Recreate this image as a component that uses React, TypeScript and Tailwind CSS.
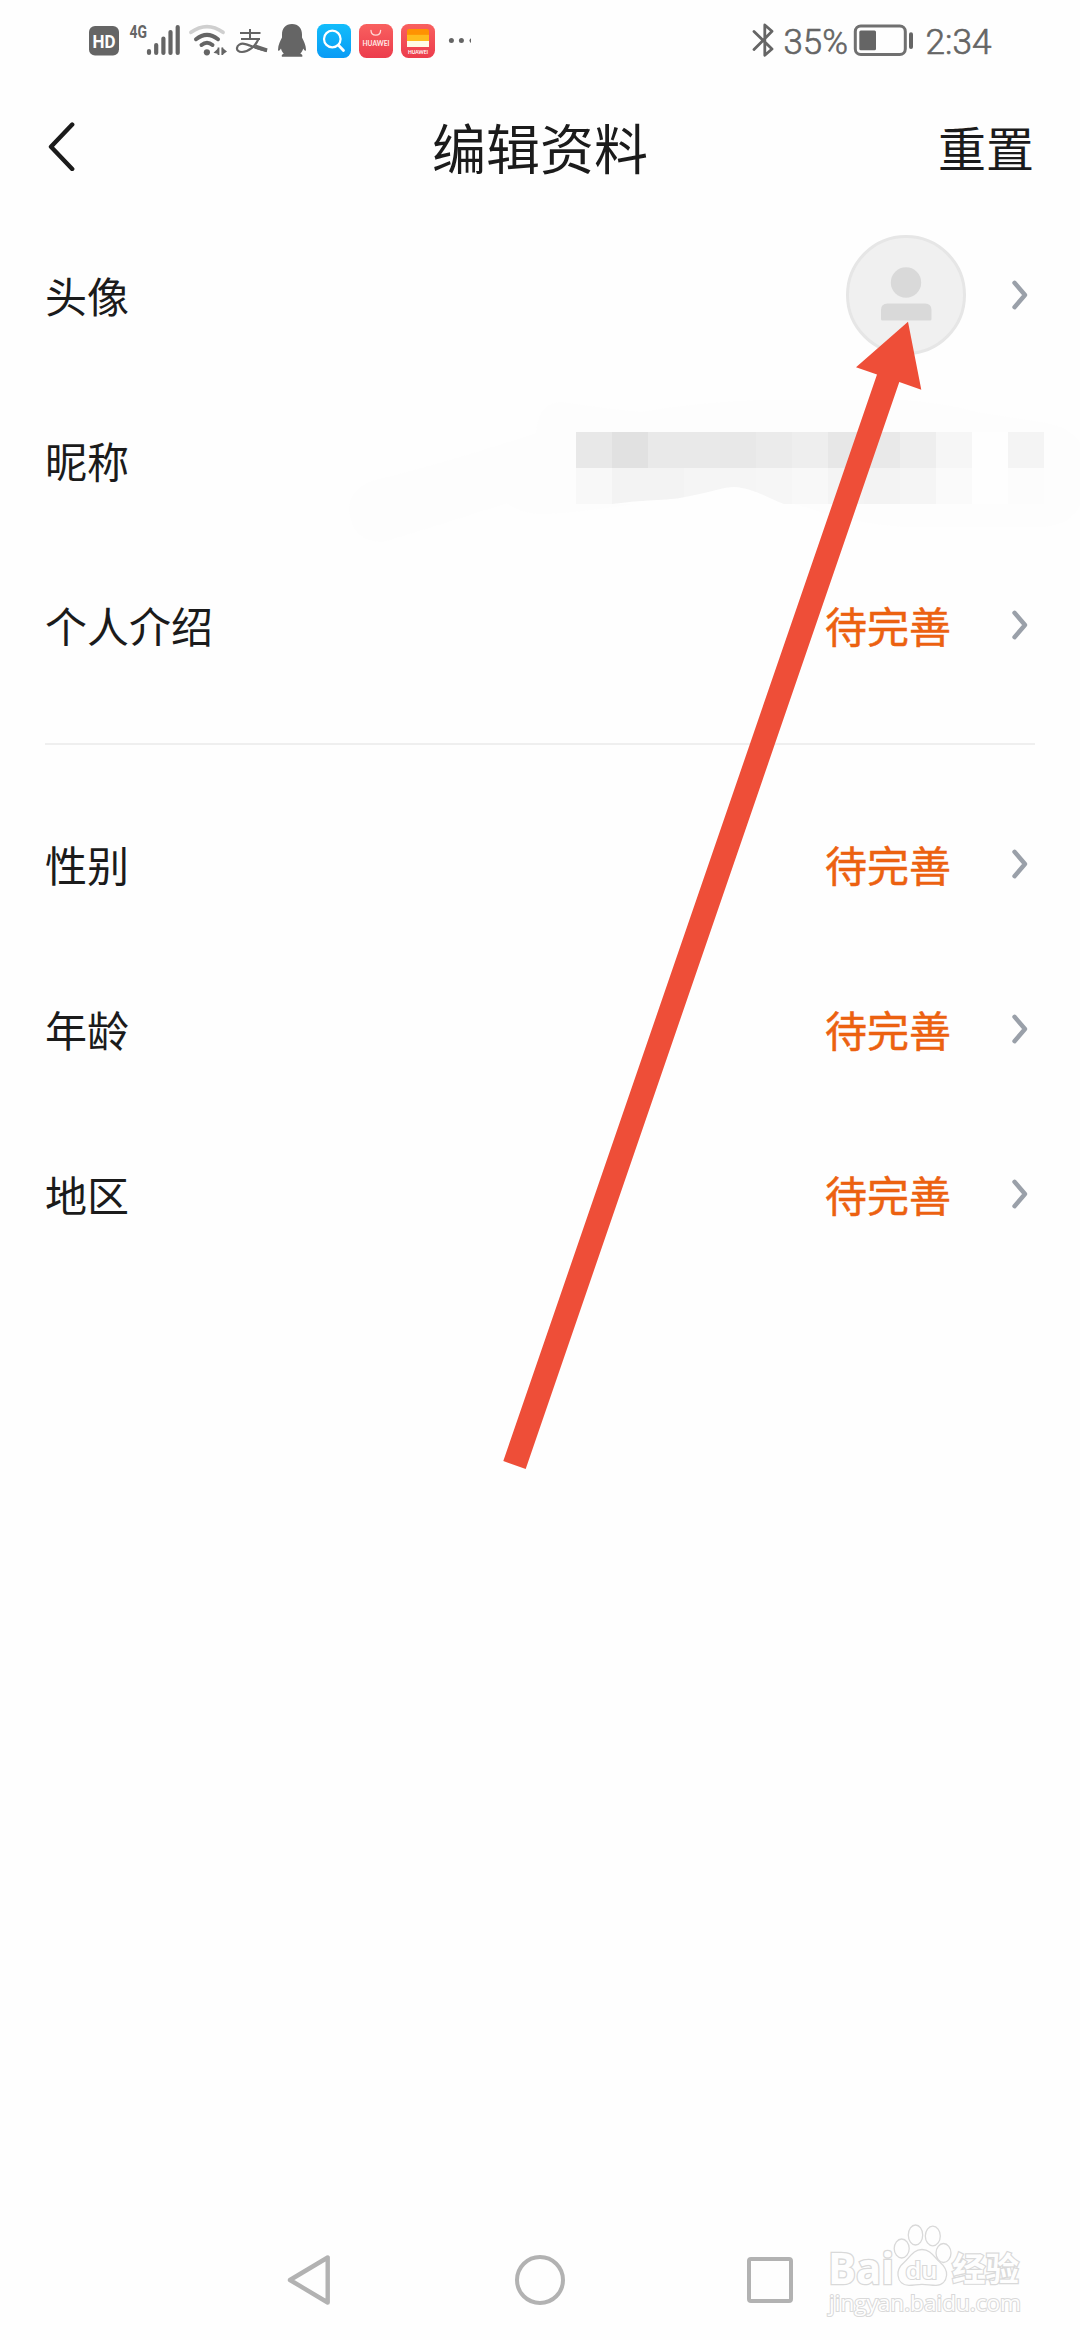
const PENDING = '待完善'

const detailRows = [
  { label: '性别', value: PENDING },
  { label: '年龄', value: PENDING },
  { label: '地区', value: PENDING },
]

// grey levels of the pixelated nickname, 13 blocks per line
const mosaic = [
  '#e8e8e8', '#e1e1e1', '#e9e9e9', '#e9e9e9', '#e8e8e8', '#ebebeb', '#eeeeee', '#e7e7e7', '#e9e9e9', '#eeeeee', '#f6f6f6', '#fefefe', '#f4f4f4',
  '#f8f8f8', '#f3f3f3', '#f3f3f3', '#f5f5f5', '#f5f5f5', '#f6f6f6', '#f8f8f8', '#f4f4f4', '#f3f3f3', '#f5f5f5', '#fafafa', '#fefefe', '#fcfcfc',
]

function StatusLeft() {
  return (
    <svg width="400" height="80" viewBox="80 0 400 80" fill="none">
      <defs>
        <linearGradient id="blue" x1="0" y1="0" x2="0" y2="1">
          <stop offset="0" stopColor="#12bdfb" />
          <stop offset="1" stopColor="#0a9bf5" />
        </linearGradient>
        <linearGradient id="red" x1="0" y1="0" x2="0" y2="1">
          <stop offset="0" stopColor="#f9605f" />
          <stop offset="1" stopColor="#ec3c4c" />
        </linearGradient>
      </defs>

      {/* HD */}
      <rect x="89" y="26" width="30" height="29.5" rx="6" fill="#656565" />
      <text x="92.5" y="48.3" textLength="23" lengthAdjust="spacingAndGlyphs" fontSize="19" fontWeight="700" fill="#fefefe" className="font-['Roboto',sans-serif]">HD</text>

      {/* Signal */}
      <text x="129.5" y="38.3" textLength="17.5" lengthAdjust="spacingAndGlyphs" fontSize="19" fontWeight="700" fill="#656565" className="font-['Roboto',sans-serif]">4G</text>
      <path d="M149 51v2M156.2 45v8M163.4 38.500v14.500M170.500 32v21M177.700 27v26" stroke="#656565" strokeWidth="4.2" strokeLinecap="round" />

      {/* Wi-Fi */}
      <path d="M191 32.300Q207 21 223 32.300" stroke="#cfcfcf" strokeWidth="3.800" strokeLinecap="round" />
      <path d="M196 39.200Q207 30.500 218 39.200" stroke="#656565" strokeWidth="4" strokeLinecap="round" />
      <path d="M201.500 45Q207 40.500 212.500 45" stroke="#656565" strokeWidth="4" strokeLinecap="round" />
      <circle cx="206.900" cy="52.300" r="3.100" fill="#656565" />
      <path d="M213.500 52.800l4.800-4.500V54zM222 47.500v7.500l5-3.500z" fill="#656565" />
      <path d="M218.500 47.500v7.500M222.300 47.500v7.500" stroke="#656565" strokeWidth="1.800" />

      {/* Alipay */}
      <g stroke="#656565">
        <path d="M240 33h20.500M250 29v10M241 39h19" strokeWidth="2" />
        <path d="M258.500 39c-3 7-10 13-16.500 13-3.800 0-5.200-2-5-4 .4-3 3.500-4.700 7-4.200 5.500.8 11 4.500 23 7" strokeWidth="2.200" />
        <path d="M255 46.500l12 3.800" strokeWidth="4" />
      </g>

      {/* QQ */}
      <path
        d="M292 24c-6.500 0-10 4.500-10 10.500v3c-1.500 3-4 7.500-4 12.500 0 1.500 1.500.8 3-1.500.4 2 1.300 3.700 2.800 5-1.800.8-2.600 2.200-1.800 3.200h20.200c.7-1 0-2.400-1.900-3.200 1.500-1.300 2.400-3 2.900-5 1.400 2.300 2.800 3 2.800 1.500 0-5-2.500-9.500-4-12.500v-3c0-6-3.500-10.500-10-10.500z"
        fill="#656565"
      />

      {/* Search app */}
      <rect x="317" y="24" width="34" height="34" rx="7.500" fill="url(#blue)" />
      <circle cx="332.300" cy="39" r="8.300" stroke="#fff" strokeWidth="2.200" />
      <path d="M338.500 45.200l5 5.300" stroke="#fff" strokeWidth="2.800" strokeLinecap="round" />

      {/* App gallery */}
      <rect x="359" y="24" width="34" height="34" rx="7.500" fill="url(#red)" />
      <path d="M371 30.500c.3 6.200 9.300 6.200 9.600 0" stroke="#ffd9d6" strokeWidth="1.300" strokeLinecap="round" />
      <text x="362.500" y="45.800" textLength="27" lengthAdjust="spacingAndGlyphs" fontSize="6.800" fontWeight="700" fill="#ffe9e8" className="font-['Lato',sans-serif]">HUAWEI</text>

      {/* Wallet */}
      <rect x="401" y="24" width="34" height="34" rx="7.500" fill="url(#red)" />
      <path d="M407 35v-4q0-2 2-2h18q2 0 2 2v4z" fill="#ff9202" />
      <path d="M407 34.800h22v6.500h-22z" fill="#ffbb1c" />
      <path d="M407 41h22v6h-22z" fill="#fffbe6" />
      <text x="408" y="53.800" textLength="20" lengthAdjust="spacingAndGlyphs" fontSize="5.200" fontWeight="700" fill="#fff" className="font-['Lato',sans-serif]">HUAWEI</text>

      <g fill="#656565">
        <circle cx="451.400" cy="40.600" r="2.500" />
        <circle cx="461.400" cy="40.600" r="2.500" />
        <path d="M471 38.300a2.500 2.500 0 000 4.600z" />
      </g>
    </svg>
  )
}

function StatusRight() {
  return (
    <svg width="250" height="80" viewBox="745 0 250 80" fill="none">
      <path d="M754 31.500l18 17.500-7.200 6.300V25l7.200 6.300-18 18.200" stroke="#656565" strokeWidth="2.800" strokeLinecap="round" strokeLinejoin="round" />
      <text x="783.5" y="54" textLength="64.500" lengthAdjust="spacingAndGlyphs" fontSize="34.500" fill="#656565" className="font-['Roboto',sans-serif] font-light" stroke="#656565" strokeWidth="0.6">35%</text>
      <rect x="855.300" y="26" width="50" height="28.500" rx="5.500" stroke="#707070" strokeWidth="3" />
      <rect x="859.300" y="30.500" width="16.700" height="19.700" rx="1.500" fill="#656565" />
      <rect x="909" y="32.300" width="4" height="16.700" rx="2" fill="#656565" />
      <text x="925.5" y="54" textLength="66" lengthAdjust="spacingAndGlyphs" fontSize="34.500" fill="#656565" className="font-['Roboto',sans-serif] font-light" stroke="#656565" strokeWidth="0.6">2:34</text>
    </svg>
  )
}

function Chevron() {
  return (
    <svg width="16" height="30" viewBox="0 0 16 30" fill="none">
      <path d="M2.500 2.800L13 15 2.500 27.200" stroke="#9aa0a9" strokeWidth="4.400" strokeLinecap="round" strokeLinejoin="round" />
    </svg>
  )
}

function Avatar() {
  return (
    <svg width="120" height="120" viewBox="0 0 120 120">
      <circle cx="60" cy="60" r="58.500" fill="#f0f0f0" stroke="#e6e6e6" strokeWidth="3" />
      <circle cx="60" cy="47.500" r="15.200" fill="#d9d9d9" />
      <path d="M35 84.500V75q0-6.500 6.500-6.500h37.500q6.500 0 6.500 6.500v9q0 1.500-1.500 1.500H36.500q-1.500 0-1.500-1.500z" fill="#d9d9d9" />
    </svg>
  )
}

function Row({ label, value, avatar }: { label: string; value?: string; avatar?: boolean }) {
  return (
    <div className="flex h-[165px] items-center pl-[45px] pr-[52px]">
      <span className="flex-1 text-[42px] leading-none">{label}</span>
      {value && (
        <span className="mr-[61px] text-[42px] leading-none text-[#ec6110] [-webkit-text-stroke:0.5px_#ec6110]">{value}</span>
      )}
      {avatar && (
        <span className="mr-[46px]">
          <Avatar />
        </span>
      )}
      <Chevron />
    </div>
  )
}

function NicknameRow() {
  return (
    <div className="relative flex h-[165px] items-center justify-between pl-[45px] pr-[36px]">
      {/* smudge around the hidden name */}
      <svg className="absolute left-0 top-0" width="1080" height="165" viewBox="0 377 1080 165">
        <path
          d="M349 510Q349 490 372 481Q450 462 536 433Q538 402 562 402Q600 408 641 412Q700 402 760 400H904Q950 404 976 412L1047 423Q1070 428 1080 442V505Q1070 527 1038 527H904Q850 523 808 508L734 487Q600 512 545 514Q520 514 507 503Q440 525 383 542Q352 542 349 510z"
          fill="#fdfdfd"
        />
      </svg>
      <span className="relative text-[42px] leading-none">昵称</span>
      <div className="relative mt-[16px] grid grid-cols-[repeat(13,36px)]">
        {mosaic.map((color, i) => (
          <div key={i} className="h-9" style={{ backgroundColor: color }} />
        ))}
        <svg className="absolute bottom-0 left-0" width="240" height="20" viewBox="576 484 240 20">
          <path d="M612 504C650 499 670 501 690 496C710 492 725 487 734 487C752 488 766 497 784 504z" fill="#fefefe" />
        </svg>
      </div>
    </div>
  )
}

function Watermark() {
  return (
    <svg className="absolute left-[820px] top-[2215px]" width="210" height="110" viewBox="820 2215 210 110" fill="#fefefe" stroke="#d9d9d9" strokeWidth="1.300">
      <text x="828" y="2284" textLength="66" lengthAdjust="spacingAndGlyphs" fontSize="43" fontWeight="700" strokeWidth="2.600" paintOrder="stroke" className="font-['Open_Sans',sans-serif]">Bai</text>
      <path d="M922 2249.500c-9 0-12 8-18 13-5 4-6.500 8-6 13 .7 6 5 9.800 11 9.800 5 0 8-1 13-1s9 1 14 1c6 0 10-4 10.600-10 .4-5-2-9-6.600-13-6-5-9-12.800-18-12.800z" />
      <ellipse cx="901.700" cy="2248.500" rx="7.500" ry="9.500" />
      <ellipse cx="915.500" cy="2235" rx="7.200" ry="10" />
      <ellipse cx="932.800" cy="2236" rx="7.500" ry="9.800" />
      <ellipse cx="943.500" cy="2253" rx="7.500" ry="9.500" />
      <text x="905.500" y="2279" textLength="32" lengthAdjust="spacingAndGlyphs" fontSize="24" fontWeight="600" strokeWidth="2.200" paintOrder="stroke" className="font-['Open_Sans',sans-serif]">du</text>
      <text x="952" y="2281" textLength="67" lengthAdjust="spacingAndGlyphs" fontSize="33" fontWeight="700" strokeWidth="2.400" paintOrder="stroke" className="font-['Noto_Sans_CJK_SC',sans-serif]">经验</text>
      <text x="829" y="2310.500" textLength="192" lengthAdjust="spacingAndGlyphs" fontSize="22" strokeWidth="2" paintOrder="stroke" className="font-['Open_Sans',sans-serif]">jingyan.baidu.com</text>
    </svg>
  )
}

export default function App() {
  return (
    <div className="relative flex h-[2340px] w-[1080px] flex-col overflow-hidden bg-[#fefefe] font-['Noto_Sans_CJK_SC',sans-serif] text-[#1b1b1b]">
      <div className="flex h-20 justify-between pl-20 pr-[85px]">
        <StatusLeft />
        <StatusRight />
      </div>

      <header className="grid h-[132px] grid-cols-3 items-center pl-[46px] pr-[46px]">
        <svg width="30" height="50" viewBox="0 0 30 50" fill="none">
          <path d="M26.200 4.500L5 26.700 26.200 49" transform="translate(0 -1)" stroke="#1b1b1b" strokeWidth="4.400" strokeLinecap="round" strokeLinejoin="round" />
        </svg>
        <h1 className="whitespace-nowrap pt-px text-center text-[54px] leading-none">编辑资料</h1>
        <span className="text-right text-[48px] leading-none">重置</span>
      </header>

      <Row label="头像" avatar />
      <NicknameRow />
      <Row label="个人介绍" value={PENDING} />

      <div className="mx-[45px] my-9 h-0.5 bg-[#efefef]" />

      {detailRows.map((row) => (
        <Row key={row.label} label={row.label} value={row.value} />
      ))}

      {/* System navigation */}
      <nav className="mt-auto flex h-[120px] items-center justify-between pl-[286px] pr-[287px]">
        <svg width="46" height="52" viewBox="0 0 46 52" fill="none">
          <path d="M41.700 3.500v45L4 26z" stroke="#b2b2b2" strokeWidth="4.400" strokeLinejoin="round" />
        </svg>
        <div className="h-[50px] w-[50px] rounded-full border-[4.5px] border-[#b2b2b2]" />
        <div className="h-[46px] w-[46px] rounded-[4px] border-4 border-[#b2b2b2]" />
      </nav>

      <Watermark />

      {/* Pointer to the avatar */}
      <svg className="absolute left-[490px] top-[310px]" width="450" height="1170" viewBox="490 310 450 1170">
        <path d="M908 321.700L856 367.300 877 374.500 503.300 1461 525.700 1469 899.300 382 921.300 389.700z" fill="#ee4e38" />
      </svg>
    </div>
  )
}
